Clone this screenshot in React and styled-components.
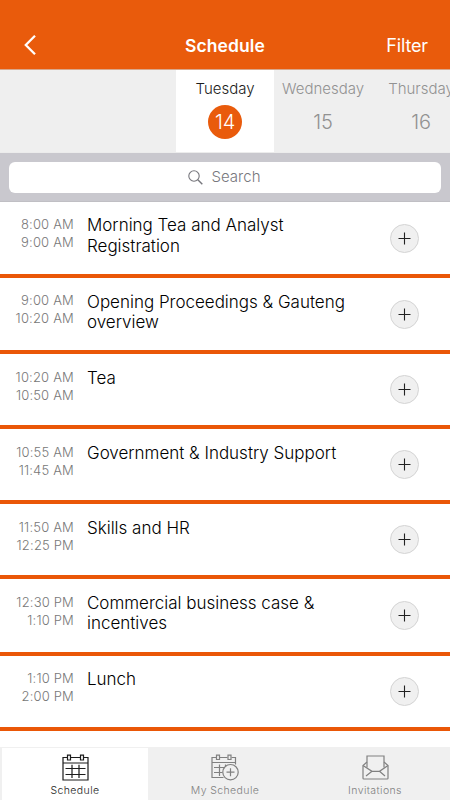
import React from 'react'
import styled, { createGlobalStyle } from 'styled-components'

const orange = '#e95b0c'

const GlobalStyle = createGlobalStyle`
    * {
        box-sizing: border-box;
    }
    body {
        margin: 0;
        background: #fff;
        font-family: Inter, "Liberation Sans", sans-serif;
        overflow: hidden;
    }
    button {
        font-family: inherit;
        border: 0;
        padding: 0;
        background: none;
    }
`

const Screen = styled.div`
    width: 450px;
    height: 800px;
    display: flex;
    flex-direction: column;
    overflow: hidden;
`

const Header = styled.header`
    height: 70px;
    flex: none;
    padding: 20px 22px 0;
    display: grid;
    grid-template-columns: 1fr auto 1fr;
    align-items: center;
    color: #fff;
    background: ${orange};
    border-bottom: 1px solid #d9a78b;
`

const BackButton = styled.button`
    display: flex;
    color: #fff;
    padding-left: 2px;
`

const HeaderTitle = styled.h1`
    margin: 0;
    padding-top: 2px;
    font-size: 17.5px;
    line-height: 22px;
    font-weight: 600;
    letter-spacing: 0.1px;
`

const FilterButton = styled.button`
    justify-self: end;
    padding-top: 2px;
    color: #fff;
    font-size: 18px;
    line-height: 22px;
    font-weight: 400;
    letter-spacing: -0.15px;
`

const DateStrip = styled.div`
    height: 83px;
    flex: none;
    display: flex;
    padding-left: 176px;
    overflow: hidden;
    background: #efefef;
    border-bottom: 1px solid #ececec;
`

const DateCell = styled.div`
    width: 98px;
    flex: none;
    display: flex;
    flex-direction: column;
    align-items: center;
    padding-top: 9px;
    color: ${props => props.$active ? '#1c1c1c' : '#929292'};
    background: ${props => props.$active ? '#fff' : 'transparent'};
`

const DayName = styled.span`
    font-size: 15px;
    line-height: 20px;
    font-weight: 300;
    white-space: nowrap;
`

const DayNumber = styled.span`
    width: 34px;
    height: 34px;
    margin-top: 6px;
    border-radius: 50%;
    display: flex;
    align-items: center;
    justify-content: center;
    font-size: 20px;
    font-weight: 300;
    letter-spacing: -0.2px;
    color: ${props => props.$active ? '#fff' : 'inherit'};
    background: ${props => props.$active ? orange : 'transparent'};
`

const SearchBar = styled.div`
    height: 49px;
    flex: none;
    padding: 9px 9px 8px;
    background: #c9c8ce;
    border-bottom: 1px solid #c0bfc4;
`

const SearchField = styled.div`
    height: 31px;
    display: flex;
    align-items: center;
    justify-content: center;
    gap: 8px;
    padding: 0 1px 2px 0;
    border-radius: 6px;
    background: #fff;
    color: #77777d;
    font-size: 15px;
    font-weight: 300;
    letter-spacing: 0.05px;

    svg {
        margin-top: 1px;
    }
`

const SessionList = styled.div`
    flex: 1;
    min-height: 0;
    overflow: hidden;
`

const SessionRow = styled.div`
    height: ${props => props.$tall ? 76.2 : 75}px;
    display: flex;
    border-bottom: 4px solid #ea5707;
`

const Times = styled.div`
    width: 74px;
    flex: none;
    padding-top: 13.2px;
    text-align: right;
    font-size: 13px;
    line-height: 18px;
    font-weight: 300;
    letter-spacing: 0.18px;
    color: #777;
`

const SessionTitle = styled.div`
    width: 303px;
    flex: none;
    padding: 13.4px 20px 0 13px;
    font-size: 17px;
    line-height: 20.5px;
    font-weight: 350;
    letter-spacing: -0.01px;
    color: #000;
    white-space: pre-line;
`

const AddButton = styled.button`
    width: 29px;
    height: 29px;
    margin-left: 13px;
    align-self: center;
    display: flex;
    align-items: center;
    justify-content: center;
    border: 1px solid #d4d4d4;
    border-radius: 50%;
    background: #f0f0f0;
    color: #222;
`

const TabBar = styled.nav`
    height: 53px;
    flex: none;
    display: grid;
    grid-template-columns: repeat(3, 1fr);
    padding: 1px 0 0;
    background: #f0f0f0;
`

const Tab = styled.button`
    display: flex;
    flex-direction: column;
    align-items: center;
    padding-top: 6px;
    margin: 0 2px;
    background: ${props => props.$active ? '#fff' : 'transparent'};
    color: ${props => props.$active ? '#1c1c1c' : '#808080'};
`

const TabLabel = styled.span`
    margin-top: 3px;
    font-size: 10.5px;
    line-height: 14px;
    font-weight: 350;
    letter-spacing: 0.4px;
`

const days = [
    { name: 'Tuesday', number: 14 },
    { name: 'Wednesday', number: 15 },
    { name: 'Thursday', number: 16 },
]

const sessions = [
    { start: '8:00 AM', end: '9:00 AM', title: 'Morning Tea and Analyst\nRegistration', tall: true },
    { start: '9:00 AM', end: '10:20 AM', title: 'Opening Proceedings & Gauteng\noverview', tall: true },
    { start: '10:20 AM', end: '10:50 AM', title: 'Tea' },
    { start: '10:55 AM', end: '11:45 AM', title: 'Government & Industry Support' },
    { start: '11:50 AM', end: '12:25 PM', title: 'Skills and HR' },
    { start: '12:30 PM', end: '1:10 PM', title: 'Commercial business case &\nincentives', tall: true },
    { start: '1:10 PM', end: '2:00 PM', title: 'Lunch' },
]

function CalendarIcon() {
    return (
        <svg width="27" height="27" viewBox="0 0 27 27" fill="none" stroke="currentColor" strokeWidth="1.2">
            <path d="M5 3.5H1V26H26V3.5H22M9 3.5H18M1 9H26" />
            <path d="M5.5 1.2H8.5V6H5.5ZM18.5 1.2H21.5V6H18.5Z" />
            <path d="M3.5 14.5H23.5M3.5 20.5H23.5M10 10.8V24M17 10.8V24" />
        </svg>
    )
}

function CalendarAddIcon() {
    return (
        <svg width="28" height="27" viewBox="0 0 28 27" fill="none" stroke="currentColor" strokeWidth="1.2">
            <path d="M5 3.5H1V23.5H12.5M9 3.5H16.5M20.5 3.5H24.5V10.5M1 8.5H24.5" />
            <path d="M5.5 1.2H8.5V5.5H5.5ZM17 1.2H20V5.5H17Z" />
            <path d="M3 13.5H13M3 18.5H11.5M8.5 10.5V22M14.5 10.5V12" />
            <circle cx="19.5" cy="18.2" r="7.7" />
            <path d="M19.5 14.2V22.2M15.5 18.2H23.5" />
        </svg>
    )
}

function EnvelopeIcon() {
    return (
        <svg width="27" height="27" viewBox="0 0 27 27" fill="none" stroke="currentColor" strokeWidth="1.2">
            <path d="M5 13.5V2H22V13.5" />
            <path d="M5 8L1 11.5V24.2Q1 25 1.8 25H25.2Q26 25 26 24.2V11.5L22 8" />
            <path d="M1 11.5L10 17.3H17.5L26 11.5M10 17.3L4 22M17.5 17.3L23 22" />
        </svg>
    )
}

const tabs = [
    { label: 'Schedule', Icon: CalendarIcon },
    { label: 'My Schedule', Icon: CalendarAddIcon },
    { label: 'Invitations', Icon: EnvelopeIcon },
]

export default function App() {
    return (
        <Screen>
            <GlobalStyle />
            <Header>
                <BackButton aria-label="Back">
                    <svg width="12" height="20" viewBox="0 0 12 20" fill="none" stroke="currentColor" strokeWidth="2.3">
                        <path d="M11 0.8L1.8 10L11 19.2" />
                    </svg>
                </BackButton>
                <HeaderTitle>Schedule</HeaderTitle>
                <FilterButton>Filter</FilterButton>
            </Header>

            <DateStrip>
                {days.map((day, i) => (
                    <DateCell key={day.number} $active={i === 0}>
                        <DayName>{day.name}</DayName>
                        <DayNumber $active={i === 0}>{day.number}</DayNumber>
                    </DateCell>
                ))}
            </DateStrip>

            <SearchBar>
                <SearchField>
                    <svg width="15" height="15" viewBox="0 0 15 15" fill="none" stroke="currentColor" strokeWidth="1.1">
                        <circle cx="6" cy="6" r="5.2" />
                        <path d="M9.8 9.8L14.3 14.3" strokeWidth="1.4" />
                    </svg>
                    <span>Search</span>
                </SearchField>
            </SearchBar>

            <SessionList>
                {sessions.map(session => (
                    <SessionRow key={session.start} $tall={session.tall}>
                        <Times>
                            <div>{session.start}</div>
                            <div>{session.end}</div>
                        </Times>
                        <SessionTitle>{session.title}</SessionTitle>
                        <AddButton aria-label="Add to my schedule">
                            <svg width="13" height="13" viewBox="0 0 13 13" stroke="currentColor" strokeWidth="1.1">
                                <path d="M6.5 0.5V12.5M0.5 6.5H12.5" />
                            </svg>
                        </AddButton>
                    </SessionRow>
                ))}
            </SessionList>

            <TabBar>
                {tabs.map(({ label, Icon }, i) => (
                    <Tab key={label} $active={i === 0}>
                        <Icon />
                        <TabLabel>{label}</TabLabel>
                    </Tab>
                ))}
            </TabBar>
        </Screen>
    )
}
